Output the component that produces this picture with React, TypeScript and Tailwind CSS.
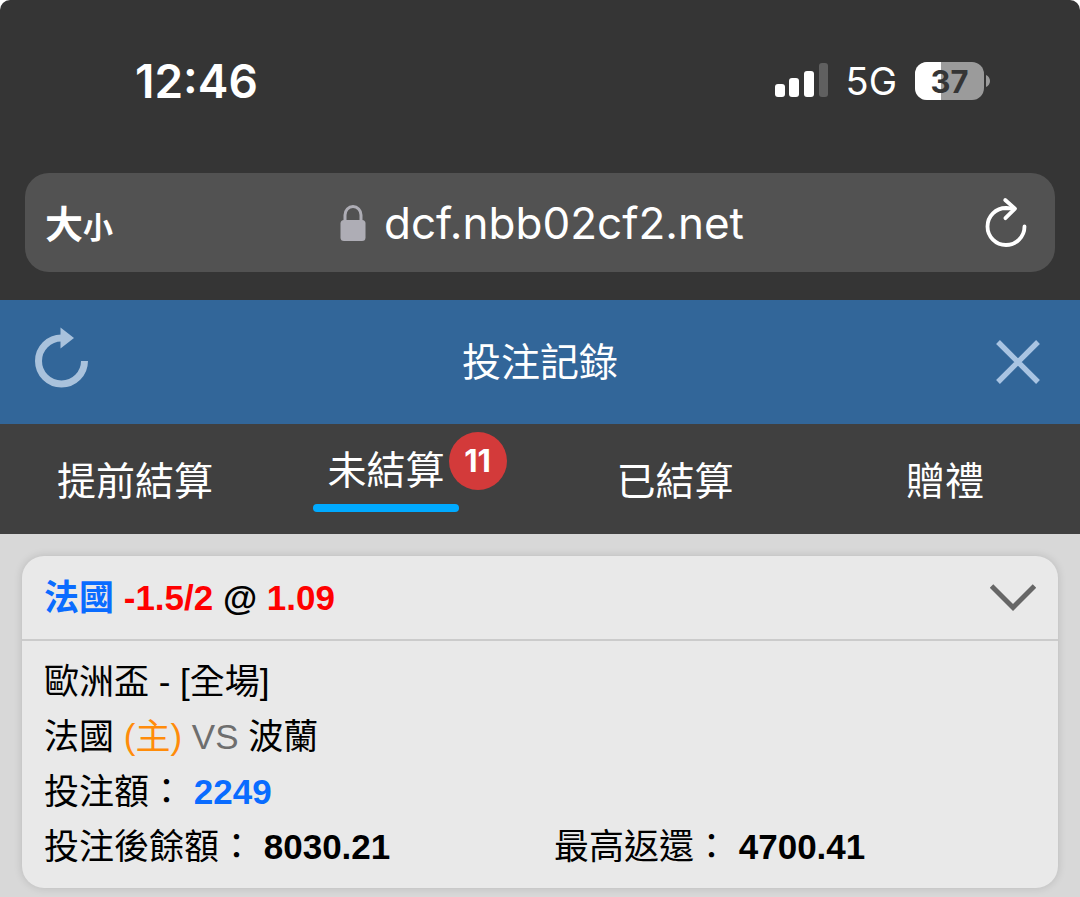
import { useState } from "react";

type Tab = {
  id: string;
  label: string;
  count?: number;
};

const tabs: Tab[] = [
  { id: "cashout", label: "提前結算" },
  { id: "open", label: "未結算", count: 11 },
  { id: "settled", label: "已結算" },
  { id: "gift", label: "贈禮" },
];

function SignalIcon() {
  return (
    <svg width="54" height="36" viewBox="0 0 54 36" aria-hidden="true">
      <rect x="0" y="21" width="10" height="13" rx="3" fill="#fff" />
      <rect x="14" y="15" width="10" height="19" rx="3" fill="#fff" />
      <rect x="29" y="8" width="10" height="26" rx="3" fill="#fff" />
      <rect x="44" y="0" width="9" height="34" rx="3" fill="#606060" />
    </svg>
  );
}

function Battery({ level }: { level: number }) {
  return (
    <div className="flex items-center gap-[2px]">
      <div className="relative flex h-[38px] w-[69px] items-center justify-center overflow-hidden rounded-[12px] bg-[#9b9b9b]">
        <div className="absolute inset-y-0 left-0 bg-white" style={{ width: `${level}%` }} />
        <span className="relative text-[31px] leading-none font-bold text-[#353535]">{level}</span>
      </div>
      <svg width="4" height="12" viewBox="0 0 4 12" aria-hidden="true">
        <path d="M0 0C2.6 1.2 4 3.4 4 6s-1.4 4.8-4 6z" fill="#9b9b9b" />
      </svg>
    </div>
  );
}

function LockIcon() {
  return (
    <svg width="26" height="36" viewBox="0 0 26 36" aria-hidden="true">
      <path d="M5 17V10a8 8.5 0 0 1 16 0v7" fill="none" stroke="#aeadb5" strokeWidth="3" />
      <rect x="0.5" y="15" width="25" height="21" rx="3.5" fill="#aeadb5" />
    </svg>
  );
}

function ReloadIcon() {
  return (
    <svg width="48" height="56" viewBox="0 0 48 56" fill="none" stroke="#fff" strokeWidth="3.8" strokeLinecap="round" strokeLinejoin="round" aria-hidden="true">
      <path d="M42.5 31.5A18.5 18.5 0 1 1 24 13L32 13.6" />
      <path d="M23.2 5L33 13.7L23.4 23.2" />
    </svg>
  );
}

function RefreshIcon() {
  return (
    <svg width="54" height="70" viewBox="0 0 54 70" aria-hidden="true">
      <path d="M49.5 34A23 23 0 1 1 26.5 11" fill="none" stroke="#a9c2dc" strokeWidth="7" />
      <path d="M25.5 0.5L39 11L25.5 21.5z" fill="#a9c2dc" />
    </svg>
  );
}

function CloseIcon() {
  return (
    <svg width="44" height="44" viewBox="0 0 44 44" aria-hidden="true">
      <path d="M2 2L42 42M42 2L2 42" stroke="#a9c4e2" strokeWidth="5.4" />
    </svg>
  );
}

function ChevronIcon({ open }: { open: boolean }) {
  return (
    <svg width="46" height="28" viewBox="0 0 46 28" className={open ? "" : "rotate-180"} aria-hidden="true">
      <path d="M1.5 2L23 23.5L44.5 2" fill="none" stroke="#666" strokeWidth="5" />
    </svg>
  );
}

function BrowserChrome() {
  return (
    <header className="rounded-t-[10px] bg-[#353535] px-[25px] pt-14 pb-7 font-[Inter,'Noto_Sans_CJK_TC',sans-serif] text-white">
      <div className="flex h-[50px] items-center justify-between pr-[65px] pl-[110px]">
        <time className="text-[46px] leading-none font-semibold">12:46</time>
        <div className="flex items-center">
          <SignalIcon />
          <span className="mr-[18px] ml-[17px] text-[38px] leading-none">5G</span>
          <Battery level={37} />
        </div>
      </div>

      <div className="mt-[67px] grid h-[99px] grid-cols-[1fr_auto_1fr] items-center rounded-[24px] bg-[#525252] px-[20px]">
        <button type="button" className="flex items-baseline justify-self-start pt-[3px] font-bold">
          <span className="text-[38px] leading-none">大</span>
          <span className="text-[30px] leading-none">小</span>
        </button>
        <div className="flex items-center gap-[18px] pl-1">
          <LockIcon />
          <input
            aria-label="網址"
            defaultValue="dcf.nbb02cf2.net"
            className="field-sizing-content bg-transparent text-[44px] leading-[56px] outline-none"
          />
        </div>
        <button type="button" aria-label="重新載入" className="justify-self-end pr-[5px]">
          <ReloadIcon />
        </button>
      </div>
    </header>
  );
}

function BetCard() {
  const [open, setOpen] = useState(true);

  return (
    <article className="overflow-hidden rounded-[22px] bg-[#e9e9e9] text-[35px] leading-[55px] text-black shadow-[0_0_8px_rgba(0,0,0,0.15)]">
      <button
        type="button"
        aria-expanded={open}
        onClick={() => setOpen(!open)}
        className="flex h-[83px] w-full items-center justify-between px-[22px] text-left font-bold"
      >
        <span>
          <span className="text-[#0a6cff]">法國</span> <span className="text-[#ff0000]">-1.5/2</span> @{" "}
          <span className="text-[#ff0000]">1.09</span>
        </span>
        <ChevronIcon open={open} />
      </button>
      {open && (
        <div className="border-t-2 border-[#cbcbcb] px-[22px] pt-[13px] pb-[14px]">
          <p>歐洲盃 - [全場]</p>
          <p>
            法國 <span className="text-[#ff8c0a]">(主)</span> <span className="text-[#6e6e6e]">VS</span> 波蘭
          </p>
          <p>
            投注額： <b className="text-[#0a6cff]">2249</b>
          </p>
          <div className="grid grid-cols-2 gap-7">
            <p>
              投注後餘額： <b>8030.21</b>
            </p>
            <p>
              最高返還： <b>4700.41</b>
            </p>
          </div>
        </div>
      )}
    </article>
  );
}

export default function App() {
  const [active, setActive] = useState("open");

  return (
    <div className="min-h-screen bg-white font-['Liberation_Sans','Noto_Sans_CJK_TC',sans-serif]" lang="zh-Hant">
      <BrowserChrome />

      <div className="grid h-[124px] grid-cols-[1fr_auto_1fr] items-center bg-[#326699] px-[35px]">
        <button type="button" aria-label="重新整理" className="justify-self-start">
          <RefreshIcon />
        </button>
        <h1 className="text-[39px] leading-none text-white">投注記錄</h1>
        <button type="button" aria-label="關閉" className="justify-self-end pr-[5px]">
          <CloseIcon />
        </button>
      </div>

      <div role="tablist" className="grid h-[110px] grid-cols-4 bg-[#404040] text-[39px] leading-[58px] text-white">
        {tabs.map((tab) => (
          <button
            key={tab.id}
            type="button"
            role="tab"
            aria-selected={active === tab.id}
            onClick={() => setActive(tab.id)}
            className="flex items-center justify-center"
          >
            <span
              className={
                active === tab.id
                  ? "flex flex-col gap-1 pb-1 after:h-2 after:rounded-full after:bg-[#00aaff]"
                  : "pt-[6px]"
              }
            >
              <span className="px-[14px]">{tab.label}</span>
            </span>
            {tab.count && (
              <span className="-mx-[10px] mb-9 flex size-[58px] items-center justify-center rounded-full bg-[#d33a3a] font-[Inter,sans-serif] text-[31px] font-bold">
                {tab.count}
              </span>
            )}
          </button>
        ))}
      </div>

      <main className="min-h-[363px] bg-[#d8d8d8] px-[22px] pt-[22px] pb-2">
        <BetCard />
      </main>
    </div>
  );
}
